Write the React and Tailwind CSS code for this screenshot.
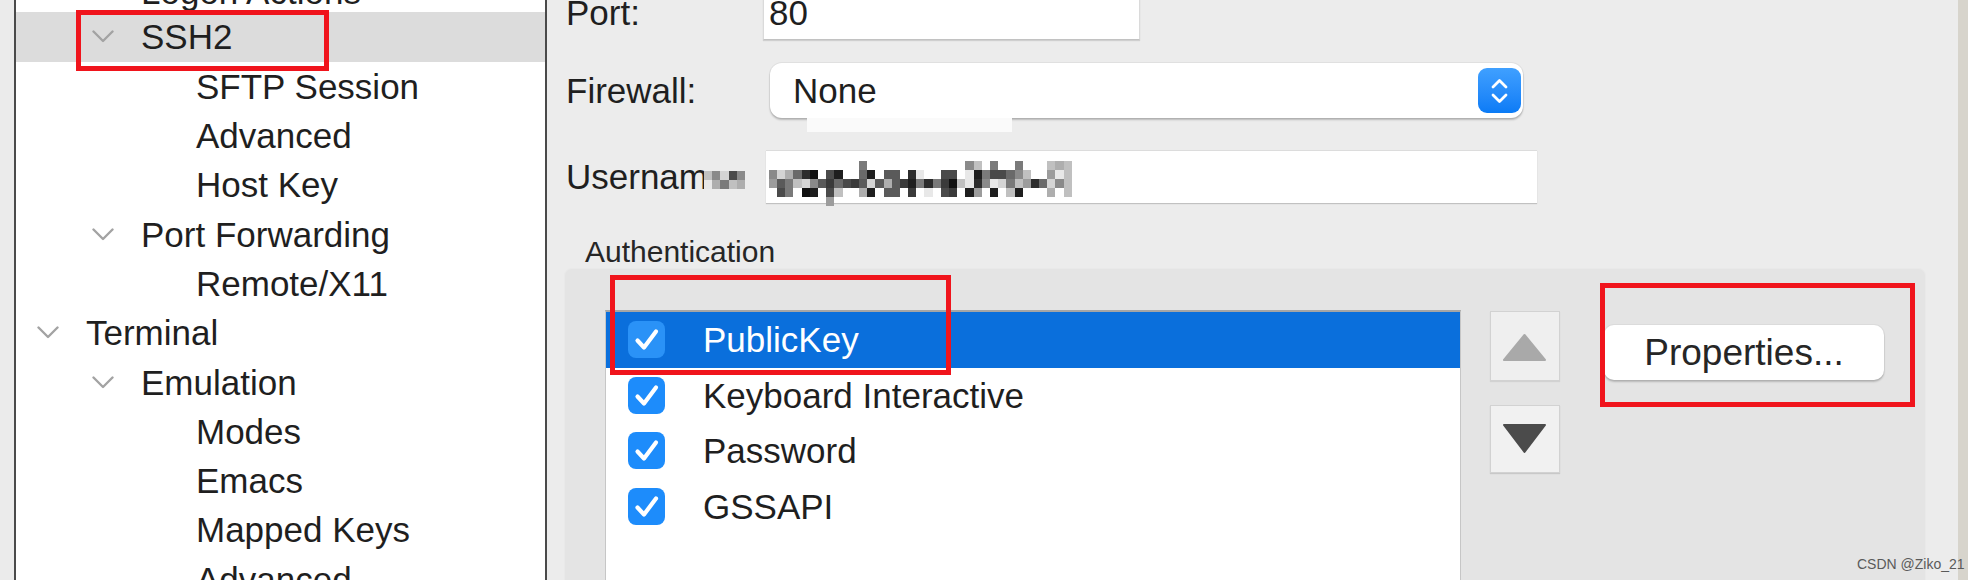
import React from "react";

const tree = [
  { label: "Logon Actions", level: 1, first: true },
  { label: "SSH2", level: 1, open: true, selected: true },
  { label: "SFTP Session", level: 2 },
  { label: "Advanced", level: 2 },
  { label: "Host Key", level: 2 },
  { label: "Port Forwarding", level: 1, open: true },
  { label: "Remote/X11", level: 2 },
  { label: "Terminal", level: 0, open: true },
  { label: "Emulation", level: 1, open: true },
  { label: "Modes", level: 2 },
  { label: "Emacs", level: 2 },
  { label: "Mapped Keys", level: 2 },
  { label: "Advanced", level: 2 },
];

const indent = ["pl-[21px]", "pl-[76px]", "pl-[131px]"];

const authMethods = ["PublicKey", "Keyboard Interactive", "Password", "GSSAPI"];

// pixelated redaction over the username
const shades = {
  a: "bg-[#e8e8e8]", b: "bg-[#d4d4d4]", c: "bg-[#c0c0c0]", d: "bg-[#aeaeae]",
  e: "bg-[#9c9c9c]", f: "bg-[#8a8a8a]", g: "bg-[#7a7a7a]", h: "bg-[#6a6a6a]",
  i: "bg-[#5a5a5a]", j: "bg-[#4a4a4a]", k: "bg-[#3a3a3a]", l: "bg-[#2c2c2c]",
  m: "bg-[#1e1e1e]", n: "bg-[#101010]", ".": "",
};

const mosaic = [
  "...........g............fc.g..g...cdc.",
  "fbdhln.jm..hm.ii.la..jj.amgjjhfc..eac.",
  "eigcbfikhjkibidikmglgkncalfabgcelhbfc.",
  ".jg.nm.jc..dm.ii.k.a.jk.me.m.cm...d.c.",
  ".......e..............................",
];

const labelMosaic = ["cfbjf", "adgcd"];

const Mosaic = ({ rows }) => (
  <div className="flex flex-col">
    {rows.map((row, r) => (
      <div key={r} className="flex">
        {row.split("").map((ch, c) => (
          <div key={c} className={`h-[9px] w-[8.2px] ${shades[ch]}`} />
        ))}
      </div>
    ))}
  </div>
);

const Chevron = () => (
  <svg width="22" height="13" viewBox="0 0 22 13" className="shrink-0">
    <polyline points="1.5,1.5 11,11 20.5,1.5" fill="none" stroke="#a3a3a3" strokeWidth="2.4" strokeLinecap="round" strokeLinejoin="round" />
  </svg>
);

const TreeRow = ({ item }) => (
  <div
    className={`flex items-center ${item.first ? "h-[42.3px]" : "h-[49.3px]"} ${indent[item.level]} ${
      item.selected ? "bg-[#dcdcdc]" : ""
    }`}
  >
    <div className="mr-[27px] flex w-[22px] justify-center">{item.open && <Chevron />}</div>
    <span className="whitespace-nowrap leading-none">{item.label}</span>
  </div>
);

const Checkbox = ({ active }) => (
  <div className={`flex h-[37px] w-[37px] items-center justify-center rounded-[8px] ${active ? "bg-[#2a92f7]" : "bg-[#1d8cfb]"}`}>
    <svg width="37" height="37" viewBox="0 0 37 37">
      <path d="M9.5 19.5 L16 26.5 L28 10.5" fill="none" stroke="white" strokeWidth="4.2" strokeLinecap="round" strokeLinejoin="round" />
    </svg>
  </div>
);

const Stepper = () => (
  <div className="flex h-[45px] w-[43px] items-center justify-center rounded-[9px] bg-gradient-to-b from-[#3fa0ff] to-[#0a7bf6]">
    <svg width="43" height="45" viewBox="0 0 43 45">
      <path d="M15 19 L21.5 12.5 L28 19" fill="none" stroke="white" strokeWidth="2.8" strokeLinecap="round" strokeLinejoin="round" />
      <path d="M15 27 L21.5 33.5 L28 27" fill="none" stroke="white" strokeWidth="2.8" strokeLinecap="round" strokeLinejoin="round" />
    </svg>
  </div>
);

export default function App() {
  return (
    <div className="relative flex h-[580px] w-[1968px] overflow-hidden bg-[#ececec] font-['Liberation_Sans',Arial,sans-serif] text-[35px] text-[#1f1f1f]">
      {/* left edge */}
      <div className="w-[14px] shrink-0 bg-[#ebebeb]" />

      {/* tree */}
      <div className="w-[533px] shrink-0 overflow-hidden border-x-2 border-[#4a4a4a] bg-white">
        <div className="-mt-[30px]">
          {tree.map((item, i) => (
            <TreeRow key={i} item={item} />
          ))}
        </div>
      </div>

      {/* settings pane */}
      <div className="w-[1411px] shrink-0 pl-[19px]">
        <div className="-mt-[15px] flex h-[55px] items-center">
          <span className="w-[197px] leading-none">Port:</span>
          <div className="flex h-full w-[377px] items-center border border-[#dadada] border-b-[#c2c2c2] bg-white pl-[5px] leading-none shadow-[0_1px_1px_rgba(0,0,0,0.12)]">
            80
          </div>
        </div>

        <div className="relative mt-[23px] flex h-[55px] items-center">
          <span className="w-[204px] leading-none">Firewall:</span>
          <div className="flex h-full w-[753px] items-center justify-between rounded-[12px] bg-white pl-[23px] pr-[2px] shadow-[0_0_0_1px_rgba(0,0,0,0.05),0_2px_2px_rgba(0,0,0,0.22)]">
            <span className="leading-none">None</span>
            <Stepper />
          </div>
          <div className="absolute left-[241px] top-[55px] h-[14px] w-[205px] bg-[#fafafa]" />
        </div>

        <div className="mt-[32px] flex h-[53px] items-center">
          <span className="leading-none">Usernam</span>
          <div className="-ml-[4px] mt-[6px]">
            <Mosaic rows={labelMosaic} />
          </div>
          <div className="ml-[21px] h-full w-[771px] border-t border-[#dcdcdc] bg-white pl-[3px] pt-[10px] shadow-[0_1px_1px_rgba(0,0,0,0.18)]">
            <Mosaic rows={mosaic} />
          </div>
        </div>

        <div className="mt-[32px] h-[33px] pl-[19px] text-[30px] leading-[33px] text-[#262626]">Authentication</div>

        <div className="-ml-[2px] h-[330px] w-[1362px] rounded-[8px] border border-[#e9e9e9] bg-[#e4e4e4] pl-[40px] pt-[41px]">
          <div className="flex items-start">
            <div className="h-[300px] w-[856px] border-x border-t-2 border-x-[#c6c6c6] border-t-[#a5a5a5] bg-white">
              {authMethods.map((m, i) => (
                <div key={m} className={`flex h-[55.5px] items-center pl-[22px] ${i === 0 ? "bg-[#0a6fdc] text-white" : ""}`}>
                  <Checkbox active={i === 0} />
                  <span className="ml-[38px] leading-none">{m}</span>
                </div>
              ))}
            </div>

            <div className="ml-[29px] mt-[1px] flex flex-col gap-[24px]">
              <div className="h-[70px] w-[70px] border border-[#d2d2d2] bg-[#efefef] shadow-[0_1px_1px_rgba(0,0,0,0.08)]">
                <svg width="68" height="68" viewBox="0 0 68 68">
                  <polygon points="13,48 54,48 33.5,23" fill="#a9a9a9" stroke="#a9a9a9" strokeWidth="2" strokeLinejoin="round" />
                </svg>
              </div>
              <div className="h-[68px] w-[70px] border border-[#d2d2d2] bg-[#f1f1f1] shadow-[0_1px_1px_rgba(0,0,0,0.12)]">
                <svg width="68" height="66" viewBox="0 0 68 66">
                  <polygon points="13,19 54,19 33.5,46" fill="#4b4b4b" stroke="#4b4b4b" strokeWidth="2" strokeLinejoin="round" />
                </svg>
              </div>
            </div>

            <div className="ml-[44px] mt-[15px] flex h-[55px] w-[280px] items-center justify-center rounded-[10px] bg-white text-[37px] leading-none text-[#262626] shadow-[0_0_0_1px_rgba(0,0,0,0.04),0_2px_2px_rgba(0,0,0,0.2)]">
              Properties...
            </div>
          </div>
        </div>
      </div>

      {/* right edge */}
      <div className="w-[10px] shrink-0 bg-[#d7d4cc]" />

      {/* annotation boxes */}
      <div className="absolute left-[76px] top-[10px] h-[61px] w-[253px] border-[5px] border-[#f0141c]" />
      <div className="absolute left-[610px] top-[275px] h-[100px] w-[341px] border-[5px] border-[#f0141c]" />
      <div className="absolute left-[1600px] top-[283px] h-[124px] w-[315px] border-[5px] border-[#f0141c]" />

      <div className="absolute left-[1857px] top-[557px] text-[14px] leading-none text-[#5a5a5a]">CSDN @Ziko_21</div>
    </div>
  );
}
